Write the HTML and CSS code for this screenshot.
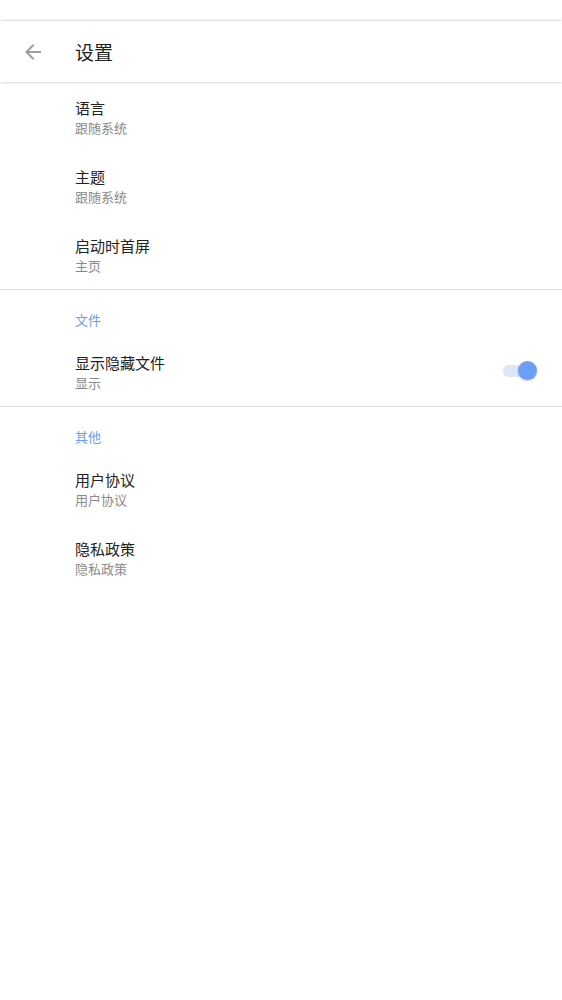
FILE: index.html
```html
<!DOCTYPE html>
<html lang="zh-CN">
<head>
<meta charset="UTF-8">
<meta name="viewport" content="width=device-width, initial-scale=1.0">
<title>设置</title>
<link rel="stylesheet" href="styles.css">
</head>
<body>
<div class="status-bar"></div>
<header class="toolbar">
  <button class="back-btn" aria-label="返回">
    <svg width="24" height="24" viewBox="0 0 24 24"><path d="M20 11H7.83l5.59-5.59L12 4l-8 8 8 8 1.41-1.41L7.83 13H20v-2z" fill="#9e9e9e"/></svg>
  </button>
  <h1 class="toolbar-title">设置</h1>
</header>

<main class="prefs">
  <section class="pref-group">
    <div class="pref-item">
      <div class="pref-title">语言</div>
      <div class="pref-summary">跟随系统</div>
    </div>
    <div class="pref-item">
      <div class="pref-title">主题</div>
      <div class="pref-summary">跟随系统</div>
    </div>
    <div class="pref-item">
      <div class="pref-title">启动时首屏</div>
      <div class="pref-summary">主页</div>
    </div>
  </section>

  <section class="pref-group">
    <div class="pref-category">文件</div>
    <div class="pref-item pref-switch">
      <div class="pref-text">
        <div class="pref-title">显示隐藏文件</div>
        <div class="pref-summary">显示</div>
      </div>
      <div class="switch on"><span class="switch-track"></span><span class="switch-thumb"></span></div>
    </div>
  </section>

  <section class="pref-group">
    <div class="pref-category">其他</div>
    <div class="pref-item">
      <div class="pref-title">用户协议</div>
      <div class="pref-summary">用户协议</div>
    </div>
    <div class="pref-item">
      <div class="pref-title">隐私政策</div>
      <div class="pref-summary">隐私政策</div>
    </div>
  </section>
</main>
</body>
</html>
```

FILE: styles.css
```css
body {
  margin: 0;
  padding: 0;
  background: #ffffff;
  font-family: "Noto Sans CJK SC", "Noto Sans", sans-serif;
  color: #212121;
}
.status-bar {
  height: 21px;
  background: #ffffff;
}
.toolbar {
  height: 61px;
  display: flex;
  align-items: center;
  background: #ffffff;
  box-shadow: 0 0 3px rgba(0, 0, 0, 0.28);
  position: relative; /* keep the shadow above the list */
  z-index: 1;
}
.back-btn {
  width: 66px;
  height: 61px;
  padding: 0 0 0 21px;
  border: none;
  background: none;
  display: flex;
  align-items: center;
}
.toolbar-title {
  margin: 0 0 0 9px;
  font-size: 19px;
  font-weight: normal;
  color: #212121;
  line-height: 24px;
}
.pref-group {
  border-bottom: 1px solid #dedede;
}
.pref-group:last-child {
  border-bottom: none;
}
.pref-item {
  height: 69px;
  box-sizing: border-box;
  padding: 15px 16px 0 75px;
}
.pref-title {
  font-size: 15px;
  line-height: 22px;
  color: #212121;
}
.pref-summary {
  font-size: 13px;
  line-height: 18px;
  color: #8a8a8a;
}
.pref-category {
  padding: 21px 0 8px 75px;
  font-size: 13px;
  line-height: 18px;
  color: #6e9cf0;
}
.pref-switch {
  display: flex;
  justify-content: space-between;
}
.switch {
  width: 34px;
  height: 20px;
  margin: 9px 9px 0 0;
  position: relative;
}
.switch-track {
  position: absolute;
  left: 0;
  top: 4px;
  width: 30px;
  height: 12px;
  border-radius: 6px;
  background: #dbe6fb;
}
.switch-thumb {
  position: absolute;
  right: 0;
  top: 0;
  width: 19px;
  height: 19px;
  border-radius: 50%;
  background: #6b9ef5;
  box-shadow: 0 1px 2px rgba(0, 0, 0, 0.22);
}
```
